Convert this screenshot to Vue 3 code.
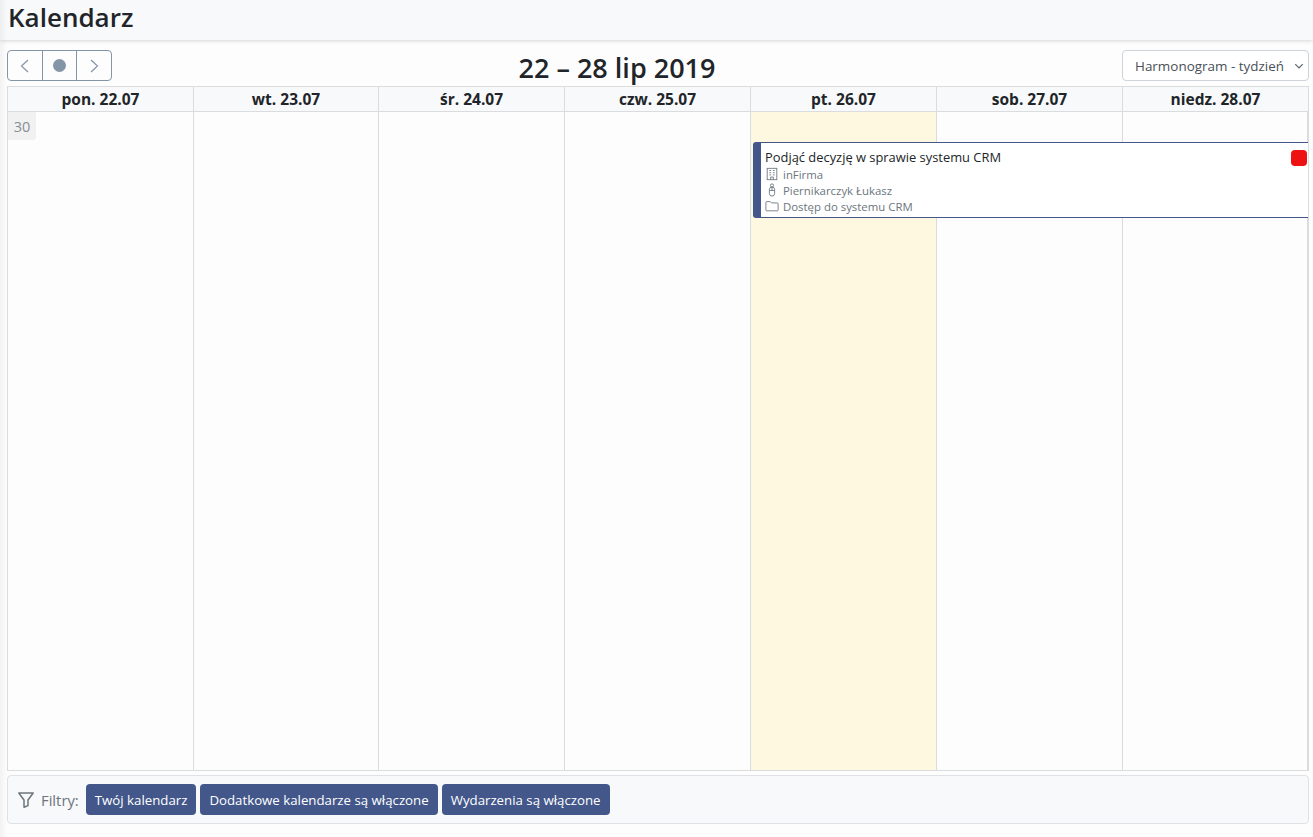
<script setup>
const days = [
  { label: 'pon. 22.07' },
  { label: 'wt. 23.07' },
  { label: 'śr. 24.07' },
  { label: 'czw. 25.07' },
  { label: 'pt. 26.07', today: true },
  { label: 'sob. 27.07' },
  { label: 'niedz. 28.07' }
]
const filters = ['Twój kalendarz', 'Dodatkowe kalendarze są włączone', 'Wydarzenia są włączone']
</script>

<template>
  <div class="page">
    <header class="topbar"><h1>Kalendarz</h1></header>
    <main class="content">
      <div class="toolbar">
        <div class="nav">
          <button class="nav-btn" aria-label="Wstecz">
            <svg width="16" height="16" viewBox="0 0 16 16" fill="none" stroke="#8595a8" stroke-width="1.2"><path d="M11 2 L4.5 8 L11 14" /></svg>
          </button>
          <button class="nav-btn mid" aria-label="Dziś"><span class="dot"></span></button>
          <button class="nav-btn" aria-label="Dalej">
            <svg width="16" height="16" viewBox="0 0 16 16" fill="none" stroke="#8595a8" stroke-width="1.2"><path d="M5 2 L11.5 8 L5 14" /></svg>
          </button>
        </div>
        <h2 class="range">22 – 28 lip 2019</h2>
        <div class="select">
          <span>Harmonogram - tydzień</span>
          <svg width="10" height="10" viewBox="0 0 16 16" fill="none" stroke="#5c6670" stroke-width="2"><path d="M2 5 L8 11 L14 5" /></svg>
        </div>
      </div>

      <section class="calendar">
        <div class="head">
          <div v-for="d in days" :key="d.label" class="head-cell">{{ d.label }}</div>
        </div>
        <div class="body">
          <div v-for="d in days" :key="d.label" class="col" :class="{ today: d.today }"></div>
          <span class="week">30</span>
          <article class="event">
            <div class="ev-title">Podjąć decyzję w sprawie systemu CRM</div>
            <div class="ev-row">
              <svg class="ev-ic" viewBox="0 0 16 16" fill="none" stroke="#6c757d" stroke-width="1"><rect x="2.5" y="1.5" width="11" height="13" /><path d="M5 4h2M9 4h2M5 6.5h2M9 6.5h2M5 9h2M9 9h2M6.5 14.5v-3h3v3" /></svg>
              <span>inFirma</span>
            </div>
            <div class="ev-row">
              <svg class="ev-ic" viewBox="0 0 16 16" fill="none" stroke="#6c757d" stroke-width="1"><circle cx="8" cy="2.8" r="1.8" /><path d="M5 7.5a3 3 0 0 1 6 0v4.5a3 3 0 0 1-6 0z M8 4.5v4M5 8.5h6" /></svg>
              <span>Piernikarczyk Łukasz</span>
            </div>
            <div class="ev-row">
              <svg class="ev-ic" viewBox="0 0 16 16" fill="none" stroke="#6c757d" stroke-width="1"><path d="M1 4a1 1 0 0 1 1-1h4l1.5 1.5H14a1 1 0 0 1 1 1v7a1 1 0 0 1-1 1H2a1 1 0 0 1-1-1z" /></svg>
              <span>Dostęp do systemu CRM</span>
            </div>
            <span class="flag"></span>
          </article>
        </div>
      </section>

      <footer class="filters">
        <svg class="f-ic" width="16" height="16" viewBox="0 0 16 16" fill="none" stroke="#6c757d" stroke-width="1.5"><path d="M.8 1h14.4L10 8v5.6L6 15.2V8z" stroke-linejoin="round" /></svg>
        <span class="f-label">Filtry:</span>
        <button v-for="f in filters" :key="f" class="f-btn">{{ f }}</button>
      </footer>
    </main>
  </div>
</template>

<style>
html, body { margin: 0; background: #fdfdfe; }
</style>

<style scoped>
.page {
  position: relative;
  width: 1313px;
  height: 837px;
  overflow: hidden;
  font-family: "Open Sans", "Noto Sans", sans-serif;
  color: #212529;
  background: #fdfdfe;
}
.page::after {
  content: "";
  position: absolute;
  left: 0;
  top: 0;
  bottom: 0;
  width: 7px;
  background: linear-gradient(to right, rgba(0, 0, 0, .045), rgba(0, 0, 0, 0));
  pointer-events: none;
}
.topbar {
  height: 40px;
  box-sizing: border-box;
  padding: 0 8px;
  display: flex;
  align-items: center;
  background: #f8f9fa;
  box-shadow: 0 1px 4px rgba(0, 0, 0, .16);
}
h1 {
  margin: 0 0 6px;
  font-size: 26px;
  font-weight: 600;
  line-height: 32px;
}
.content { padding: 10px 4px 0 7px; }
.toolbar {
  height: 31px;
  display: flex;
  align-items: center;
  justify-content: space-between;
  margin-bottom: 5px;
}
.nav {
  display: flex;
  width: 105px;
  height: 31px;
  box-sizing: border-box;
  border: 1px solid #8595a8;
  border-radius: 4px;
}
.nav-btn {
  flex: 1;
  padding: 0;
  border: 0;
  background: none;
  display: flex;
  align-items: center;
  justify-content: center;
}
.mid { border-left: 1px solid #8595a8; border-right: 1px solid #8595a8; }
.dot { width: 13px; height: 13px; border-radius: 50%; background: #8595a8; }
.range {
  margin: 4px 0 0;
  font-size: 27px;
  font-weight: 600;
  line-height: 31px;
}
.select {
  width: 187px;
  height: 31px;
  box-sizing: border-box;
  border: 1px solid #ced4da;
  border-radius: 4px;
  padding: 0 4px 0 12px;
  display: flex;
  align-items: center;
  justify-content: space-between;
  font-size: 13.45px;
  color: #495057;
  background: #fff;
}
.calendar { border: 1px solid #dadcde; width: 1302px; box-sizing: border-box; }
.head {
  display: grid;
  grid-template-columns: 186px 185px 186px 186px 186px 186px 1fr;
  height: 24px;
  background: #f8f9fa;
  border-bottom: 1px solid #dadcde;
}
.head-cell {
  text-align: center;
  font-size: 15.5px;
  font-weight: 700;
  line-height: 24px;
  border-right: 1px solid #dadcde;
}
.head-cell:last-child { border-right: 0; }
.body {
  position: relative;
  display: grid;
  grid-template-columns: 186px 185px 186px 186px 186px 186px 1fr;
  height: 658px;
  background: #fdfdfe;
}
.col { border-right: 1px solid #dadcde; }
.col:last-child { border-right: 0; }
.today { background: #fff8e1; }
.week {
  position: absolute;
  left: 0;
  top: 0;
  width: 28px;
  height: 28px;
  text-align: center;
  font-size: 14.5px;
  line-height: 30px;
  color: #868e96;
  background: #f1f1f1;
  border-bottom-right-radius: 3px;
}
.event {
  position: absolute;
  left: 745px;
  right: 0;
  top: 30px;
  height: 76px;
  box-sizing: border-box;
  padding: 6px 0 0 4px;
  background: #fff;
  border: 1px solid #43578a;
  border-left: 8px solid #43578a;
  border-right: 0;
  border-radius: 3px 0 0 3px;
}
.ev-title { font-size: 12.9px; line-height: 17px; color: #212529; }
.ev-row {
  display: flex;
  align-items: center;
  gap: 4px;
  height: 16px;
  font-size: 11.4px;
  color: #6c757d;
}
.ev-ic { width: 14px; height: 14px; flex: none; }
.flag {
  position: absolute;
  right: 1px;
  top: 7px;
  width: 16px;
  height: 16px;
  border-radius: 4px;
  background: #ee1111;
}
.filters {
  margin-top: 4px;
  width: 1302px;
  height: 49px;
  box-sizing: border-box;
  border: 1px solid #dee2e6;
  border-radius: 4px;
  background: #f8f9fa;
  display: flex;
  align-items: center;
  padding-left: 10px;
}
.f-label { margin: 0 7px 0 7px; font-size: 14.8px; color: #6c757d; }
.f-btn {
  height: 31px;
  margin-right: 4px;
  padding: 0 9px;
  border: 0;
  border-radius: 4px;
  background: #43578a;
  color: #fff;
  font-family: inherit;
  font-size: 13.25px;
}
</style>
